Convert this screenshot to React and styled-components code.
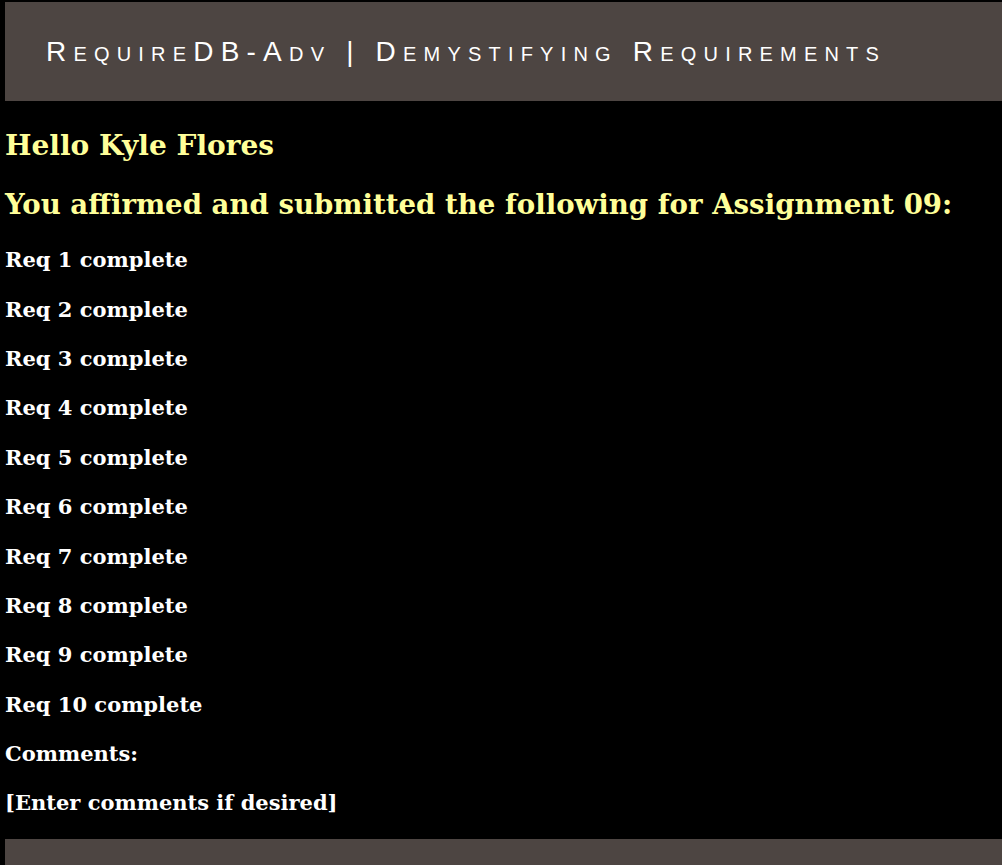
import React from "react";
import styled, { createGlobalStyle } from "styled-components";

const Global = createGlobalStyle`
  html, body { background: #000; }
  body { margin: 0; padding: 2px 0 0 5px; font-family: "DejaVu Serif", "Liberation Serif", serif; }
`;

const Header = styled.header`
  background: #4d4542;
  height: 99px;
  display: flex;
  align-items: center;
  padding-left: 41px;
`;

const Title = styled.h1`
  margin: 0;
  font-family: "Liberation Sans", Arial, sans-serif;
  font-weight: normal;
  font-variant: small-caps;
  font-size: 28px;
  letter-spacing: 7.2px;
  color: #fff;
  white-space: nowrap;
`;

const Main = styled.main`
  display: flex;
  flex-direction: column;
`;

const Greeting = styled.h2`
  margin: 28px 0 0;
  font-size: 28px;
  line-height: 34px;
  color: #ffff99;
`;

const Heading = styled.h2`
  margin: 25px 0 13px;
  font-size: 27.6px;
  line-height: 34px;
  color: #ffff99;
`;

const Line = styled.p`
  margin: 0;
  height: 49.4px;
  display: flex;
  align-items: center;
  font-weight: bold;
  font-size: 21px;
  color: #fff;
`;

const Footer = styled.footer`
  background: #4d4542;
  height: 40px;
  margin-top: 11px;
`;

export default function App() {
  const reqs = Array.from({ length: 10 }, (_, i) => i + 1);
  return (
    <>
      <Global />
      <Header>
        <Title>RequireDB-Adv | Demystifying Requirements</Title>
      </Header>
      <Main>
        <Greeting>Hello Kyle Flores</Greeting>
        <Heading>You affirmed and submitted the following for Assignment 09:</Heading>
        {reqs.map((n) => (
          <Line key={n}>Req {n} complete</Line>
        ))}
        <Line>Comments:</Line>
        <Line>[Enter comments if desired]</Line>
      </Main>
      <Footer />
    </>
  );
}
